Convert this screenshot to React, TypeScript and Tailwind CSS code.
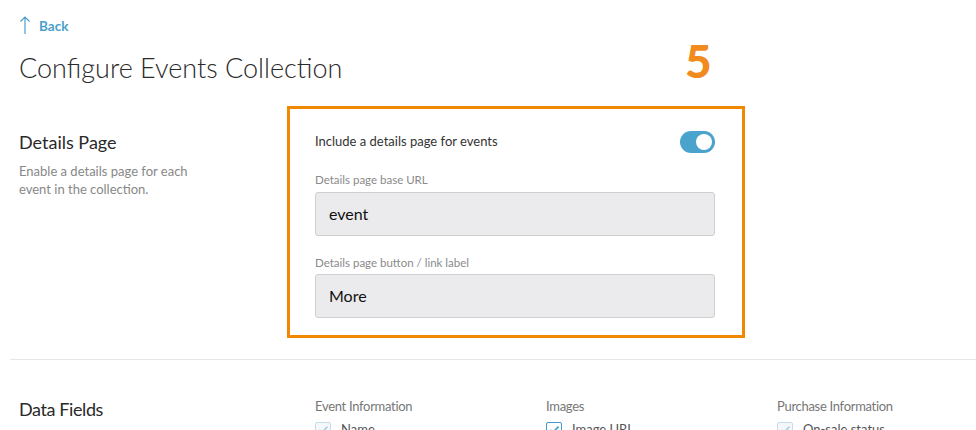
import React from "react";

const font = { fontFamily: "Lato, 'Open Sans', sans-serif" };

function Check({ on }: { on: boolean }) {
  return (
    <span
      className={
        "inline-flex w-[16px] h-[16px] items-center justify-center rounded-[2px] border " +
        (on ? "border-[#3d9bc7] bg-white" : "border-[#c9dbe4] bg-[#f4f8fa]")
      }
    >
      <svg viewBox="0 0 16 16" className="w-[13px] h-[13px]">
        <path
          d="M3 8.5l3 3 7-7"
          fill="none"
          stroke={on ? "#3d9bc7" : "#a9cfe0"}
          strokeWidth="2"
        />
      </svg>
    </span>
  );
}

function Field({ label, value }: { label: string; value: string }) {
  return (
    <div>
      <div className="text-[11.5px] text-[#8a8a8a] leading-none mb-[6px]">{label}</div>
      <div className="h-[44px] rounded-[3px] border border-[#cfcfcf] bg-[#ebebed] flex items-center px-[13px] text-[16px] text-[#111]">
        {value}
      </div>
    </div>
  );
}

function Col({ title, item, on }: { title: string; item: string; on: boolean }) {
  return (
    <div>
      <div className="text-[13px] text-[#777] tracking-[-0.3px] leading-none">{title}</div>
      <div className="mt-[7px] flex items-center gap-[10px] text-[13px] text-[#555]">
        <Check on={on} />
        {item}
      </div>
    </div>
  );
}

export default function App() {
  return (
    <div className="w-[976px] h-[430px] overflow-hidden bg-white relative" style={font}>
      <div className="pl-[19px] pt-[15px]">
        <div className="flex items-center gap-[8px] h-[20px]">
          <svg viewBox="0 0 12 20" className="w-[12px] h-[20px]">
            <path d="M6 19V2M1.5 6.5L6 2l4.5 4.5" fill="none" stroke="#4a9fcb" strokeWidth="1.2" />
          </svg>
          <span className="text-[13.5px] font-bold text-[#4a9fcb] mt-[2px]">Back</span>
        </div>
        <h1 className="mt-[16px] text-[27px] font-light text-[#2a2a2a] leading-[34px]">
          Configure Events Collection
        </h1>
      </div>

      <span className="absolute left-[685px] top-[33px] text-[46px] font-black text-[#f28b1e] leading-[56px]">
        5
      </span>

      <div className="flex mt-[21px] pl-[19px]">
        <div className="w-[268px] pt-[24px]">
          <div className="text-[18px] text-[#2a2a2a] leading-[24px]">Details Page</div>
          <div className="mt-[8px] text-[13px] text-[#888] leading-[18px] w-[190px]">
            Enable a details page for each event in the collection.
          </div>
        </div>
        <div className="w-[458px] border-[3px] border-[#f08800] pl-[25px] pr-[27px] pt-[22px] pb-[17px]">
          <div className="flex items-center justify-between h-[22px]">
            <span className="text-[13px] text-[#333]">Include a details page for events</span>
            <span className="w-[35px] h-[22px] rounded-full bg-[#4aa3cc] flex items-center justify-end pr-[3px]">
              <span className="w-[16px] h-[16px] rounded-full bg-white" />
            </span>
          </div>
          <div className="mt-[21px] flex flex-col gap-[21px]">
            <Field label="Details page base URL" value="event" />
            <Field label="Details page button / link label" value="More" />
          </div>
        </div>
      </div>

      <div className="mt-[21px] ml-[10px] h-px bg-[#e6e6e6]" />

      <div className="flex pl-[19px] pt-[40px]">
        <div className="w-[296px] text-[18px] text-[#2a2a2a] tracking-[-0.4px] -mt-[3px] leading-[24px]">Data Fields</div>
        <div className="w-[231px]">
          <Col title="Event Information" item="Name" on={false} />
        </div>
        <div className="w-[231px]">
          <Col title="Images" item="Image URL" on={true} />
        </div>
        <div>
          <Col title="Purchase Information" item="On-sale status" on={false} />
        </div>
      </div>
    </div>
  );
}
